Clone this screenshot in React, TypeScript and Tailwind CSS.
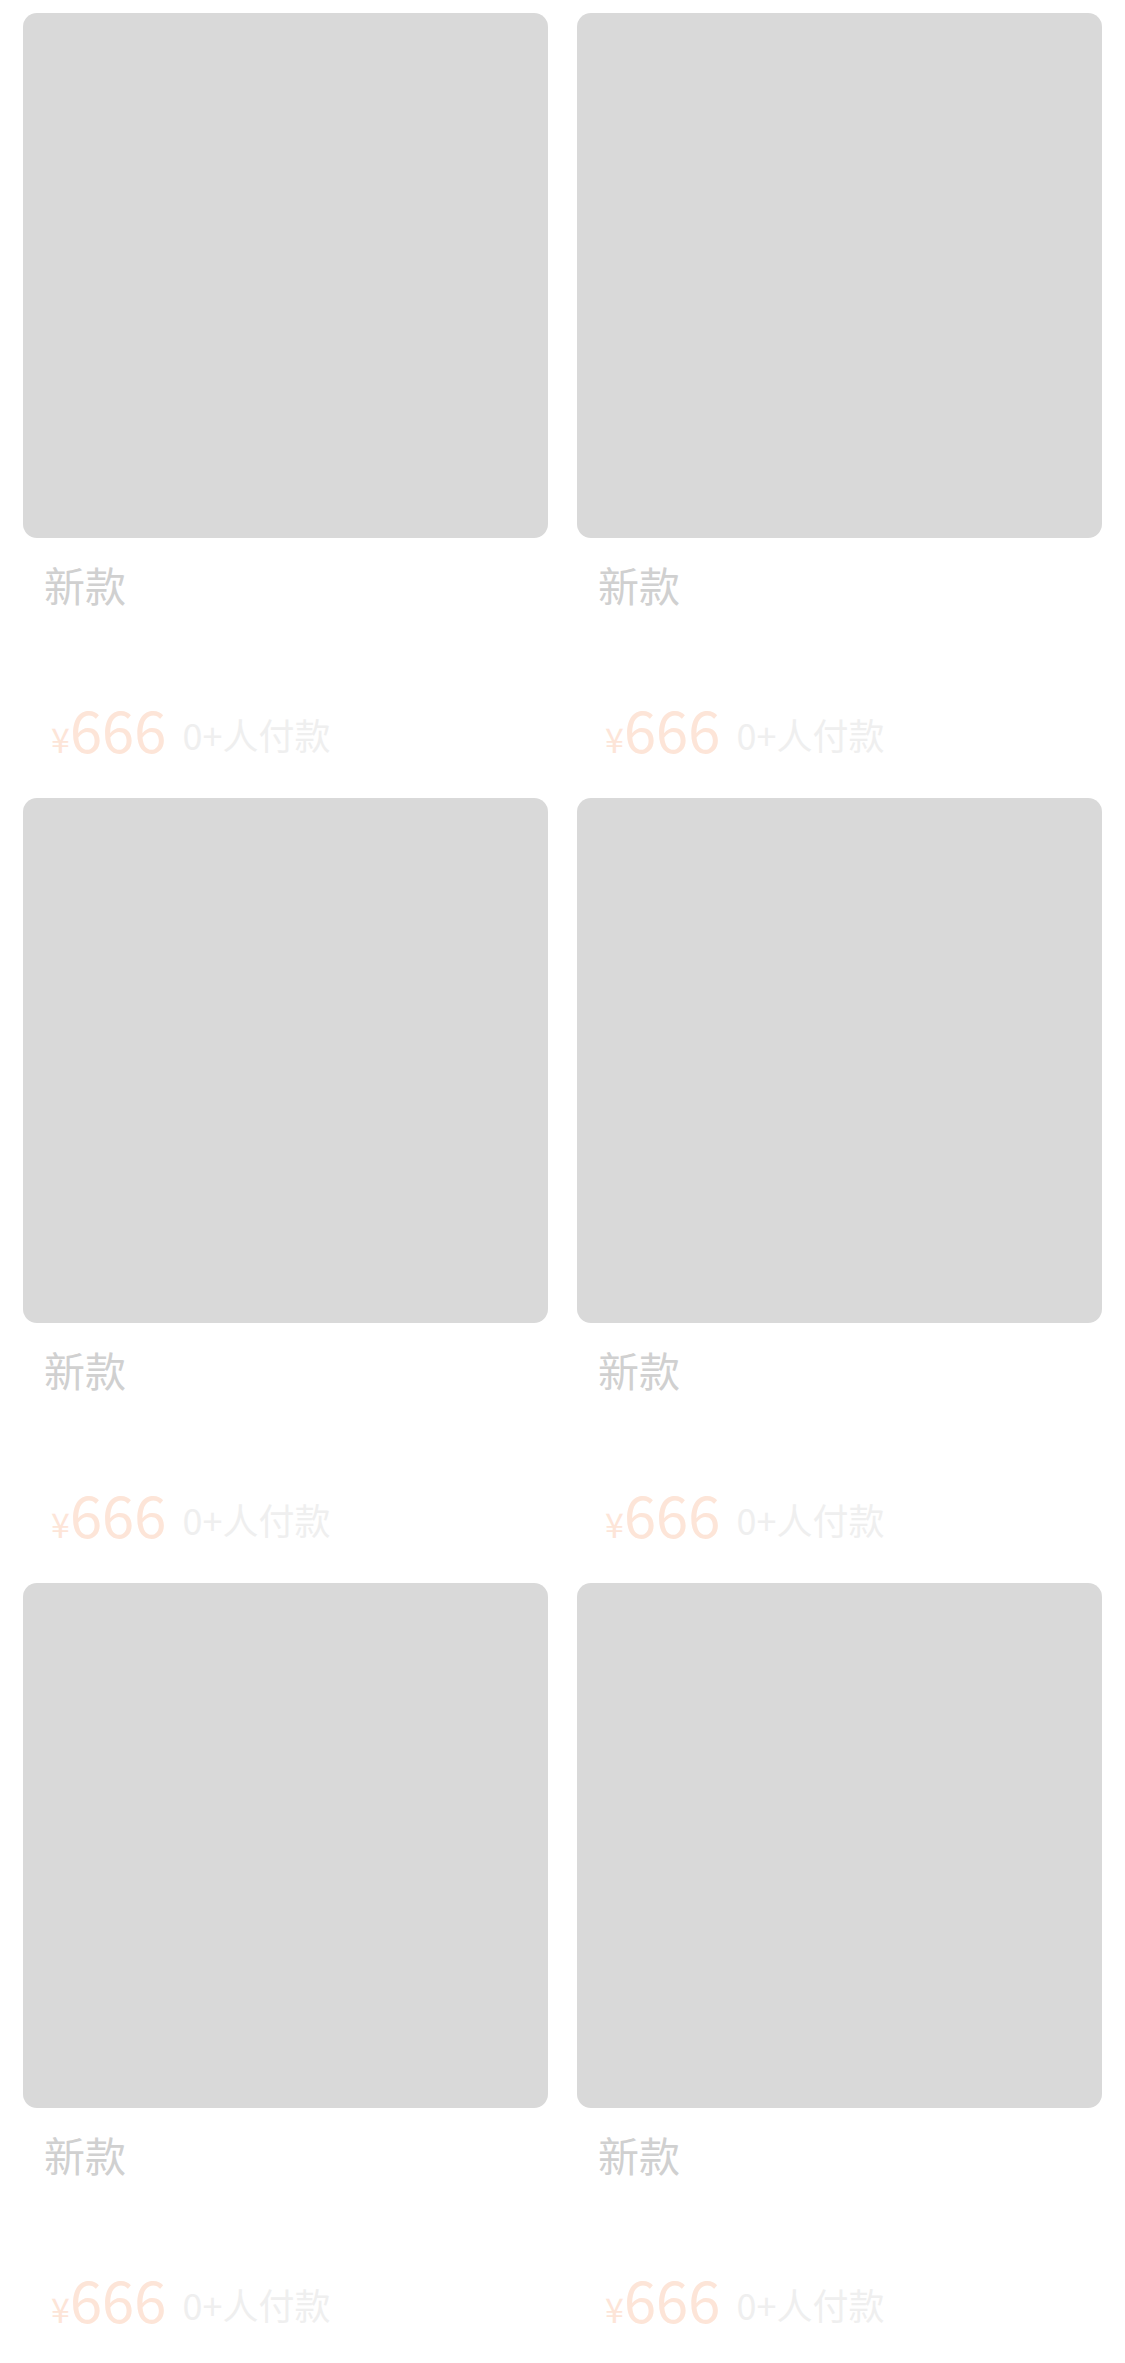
const items = Array.from({ length: 6 }, (_, i) => ({
  id: i,
  title: "新款",
  price: "666",
  sold: "0+人付款",
}))

const font = { fontFamily: '"Noto Sans CJK SC", "Noto Sans", sans-serif' }

function ProductCard({ title, price, sold }: { title: string; price: string; sold: string }) {
  return (
    <div className="flex flex-col h-[785px]">
      <div className="aspect-square w-full rounded-[14px] bg-[#d9d9d9]" />
      <div className="mt-[18px] h-[56px] px-[21px] text-[41px] leading-[56px] text-[#d0d0d0]">{title}</div>
      <div className="mt-[91px] flex h-[60px] items-center px-[28px]">
        <div className="flex items-baseline leading-[60px] text-[#fde5d8]">
          <span className="text-[34px]">¥</span>
          <span className="text-[58px]">{price}</span>
        </div>
        <span className="ml-[16px] mt-[2px] text-[36px] leading-[40px] text-[#efefef]">{sold}</span>
      </div>
    </div>
  )
}

export default function App() {
  return (
    <div className="min-h-screen w-full bg-white px-[23px] pt-[13px]" style={font}>
      <div className="grid grid-cols-2 gap-x-[29px]">
        {items.map((item) => (
          <ProductCard key={item.id} title={item.title} price={item.price} sold={item.sold} />
        ))}
      </div>
    </div>
  )
}
